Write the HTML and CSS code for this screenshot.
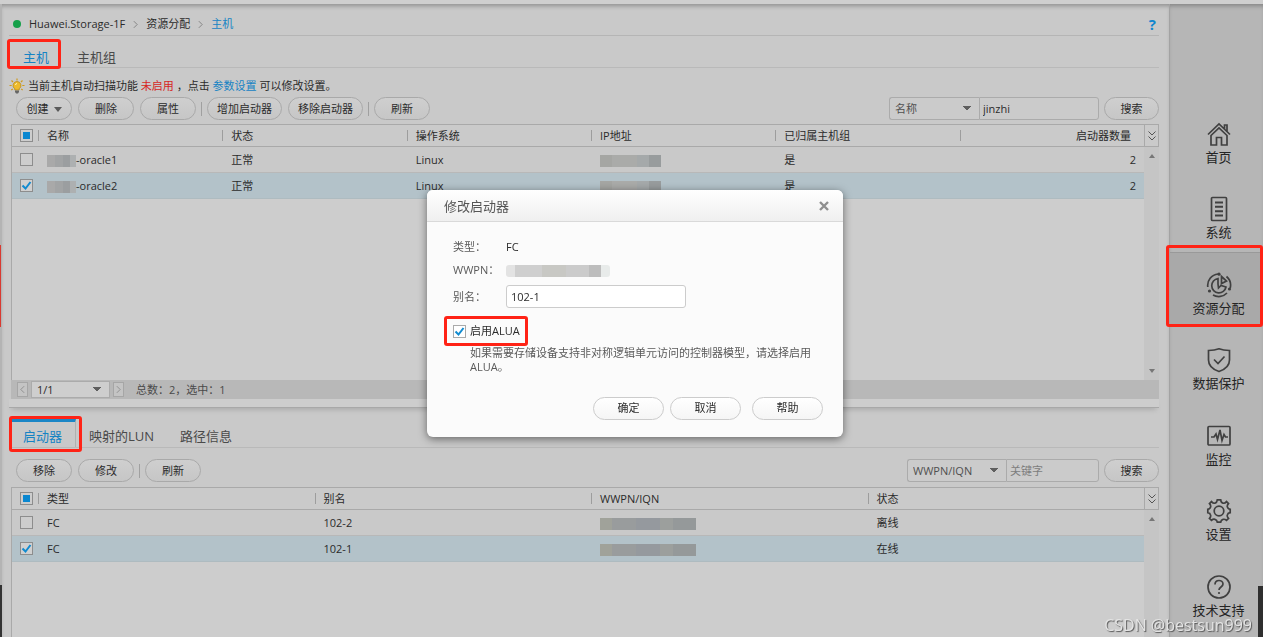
FILE: index.html
```html
<!DOCTYPE html>
<html lang="zh-CN">
<head>
<meta charset="utf-8">
<title>主机</title>
<link rel="stylesheet" href="styles.css">
</head>
<body>
<div class="app">
  <div class="topbar"></div>
  <div class="body">
    <div class="edge"><span class="edge-red"></span><span class="edge-dark"></span></div>
    <main class="main">
      <nav class="crumbs" aria-label="路径">
        <span class="dot"></span>
        <span>Huawei.Storage-1F</span>
        <svg class="crumb-arrow" viewBox="0 0 6 10"><path d="M1 1l4 4-4 4"/></svg>
        <span>资源分配</span>
        <svg class="crumb-arrow" viewBox="0 0 6 10"><path d="M1 1l4 4-4 4"/></svg>
        <a href="#" class="link">主机</a>
        <button class="help" type="button">?</button>
      </nav>

      <div class="tabs">
        <button type="button" class="tab tab-on mark">主机</button>
        <button type="button" class="tab">主机组</button>
      </div>

      <p class="notice">
        <svg class="bulb" viewBox="0 0 16 16">
          <path class="ray" d="M8 .5v2M2.500 2.500L4 4M13.500 2.500L12 4M.5 7.500h2.200M13.300 7.500h2.200M2.300 12l1.500-1M13.700 12l-1.500-1"/>
          <path class="glass" d="M8 3.500a4 4 0 0 0-2.200 7.300V12h4.400v-1.200A4 4 0 0 0 8 3.500z"/>
          <path class="shine" d="M6.500 7a1.500 1.500 0 0 1 1.500-1.500"/>
          <path class="cap" d="M6 12.500h4v1.500l-1 1.500H7L6 14z"/>
        </svg>
        <span>当前主机自动扫描功能 <em class="off">未启用</em> ，点击 <a href="#" class="link">参数设置</a> 可以修改设置。</span>
      </p>

      <div class="toolbar">
        <button type="button" class="btn">创建<span class="caret"></span></button>
        <button type="button" class="btn">删除</button>
        <button type="button" class="btn">属性</button>
        <span class="sep"></span>
        <button type="button" class="btn">增加启动器</button>
        <button type="button" class="btn">移除启动器</button>
        <span class="sep"></span>
        <button type="button" class="btn">刷新</button>
        <form class="search">
          <select class="field-pick pick-name" aria-label="搜索字段"><option>名称</option></select>
          <input class="field-key key-wide" type="text" value="jinzhi" aria-label="搜索内容">
          <button type="button" class="btn btn-search">搜索</button>
        </form>
      </div>

      <section class="grid grid-hosts">
        <div class="grid-area">
          <table class="table">
            <colgroup><col class="col-check"><col><col><col><col><col><col></colgroup>
            <thead><tr>
              <th><input type="checkbox" class="check check-some" aria-label="全选"></th>
              <th>名称</th><th>状态</th><th>操作系统</th><th>IP地址</th><th>已归属主机组</th><th class="num">启动器数量</th>
            </tr></thead>
            <tbody>
              <tr>
                <td><input type="checkbox" class="check" aria-label="oracle1"></td>
                <td><span class="mosaic mosaic-name"></span>-oracle1</td><td>正常</td><td>Linux</td>
                <td><span class="mosaic mosaic-ip"></span></td><td>是</td><td class="num">2</td>
              </tr>
              <tr class="picked">
                <td><input type="checkbox" class="check" checked aria-label="oracle2"></td>
                <td><span class="mosaic mosaic-name"></span>-oracle2</td><td>正常</td><td>Linux</td>
                <td><span class="mosaic mosaic-ip"></span></td><td>是</td><td class="num">2</td>
              </tr>
            </tbody>
          </table>
        </div>
        <div class="rail">
          <button type="button" class="rail-head" aria-label="选择列"><svg viewBox="0 0 10 12"><path d="M1.500 1.500L5 5l3.500-3.500M1.500 6.500L5 10l3.500-3.500"/></svg></button>
          <span class="rail-up"></span>
          <span class="rail-down"></span>
        </div>
      </section>

      <div class="pager">
        <button type="button" class="page-btn" aria-label="上一页"><svg viewBox="0 0 6 10"><path d="M5 1L1 5l4 4"/></svg></button>
        <select class="page-pick" aria-label="页码"><option>1/1</option></select>
        <button type="button" class="page-btn" aria-label="下一页"><svg viewBox="0 0 6 10"><path d="M1 1l4 4-4 4"/></svg></button>
        <span class="page-info">总数：2，选中：1</span>
      </div>
      <div class="splitter"></div>

      <div class="tabs tabs-lower">
        <button type="button" class="tab tab-on tab-card mark">启动器</button>
        <button type="button" class="tab">映射的LUN</button>
        <button type="button" class="tab">路径信息</button>
      </div>

      <div class="toolbar toolbar-lower">
        <button type="button" class="btn">移除</button>
        <button type="button" class="btn">修改</button>
        <span class="sep"></span>
        <button type="button" class="btn">刷新</button>
        <form class="search">
          <select class="field-pick pick-wwpn" aria-label="搜索字段"><option>WWPN/IQN</option></select>
          <input class="field-key" type="text" placeholder="关键字" aria-label="关键字">
          <button type="button" class="btn btn-search">搜索</button>
        </form>
      </div>

      <section class="grid grid-ports">
        <div class="grid-area">
          <table class="table">
            <colgroup><col class="col-check"><col><col><col><col></colgroup>
            <thead><tr>
              <th><input type="checkbox" class="check check-some" aria-label="全选"></th>
              <th>类型</th><th>别名</th><th>WWPN/IQN</th><th>状态</th>
            </tr></thead>
            <tbody>
              <tr>
                <td><input type="checkbox" class="check" aria-label="102-2"></td>
                <td>FC</td><td>102-2</td><td><span class="mosaic mosaic-wwpn"></span></td><td>离线</td>
              </tr>
              <tr class="picked">
                <td><input type="checkbox" class="check" checked aria-label="102-1"></td>
                <td>FC</td><td>102-1</td><td><span class="mosaic mosaic-wwpn"></span></td><td>在线</td>
              </tr>
            </tbody>
          </table>
        </div>
        <div class="rail">
          <button type="button" class="rail-head" aria-label="选择列"><svg viewBox="0 0 10 12"><path d="M1.500 1.500L5 5l3.500-3.500M1.500 6.500L5 10l3.500-3.500"/></svg></button>
          <span class="rail-up"></span>
        </div>
      </section>
    </main>

    <nav class="side" aria-label="主菜单">
      <a href="#" class="side-item">
        <svg viewBox="0 0 26 26"><path d="M2 13.500L13 3l11 10.500M18.500 8V4h2.500v6.300"/><path d="M5 14.500V24h5.500v-7.500h5V24H21v-9.500L13 7z"/></svg>
        <span>首页</span></a>
      <a href="#" class="side-item">
        <svg viewBox="0 0 26 26"><rect x="5.500" y="1.500" width="15" height="23" rx="1"/><path class="thick" d="M9 6.500h8M9 10.800h8M9 15.200h8M9 19.500h8"/></svg>
        <span>系统</span></a>
      <a href="#" class="side-item side-on mark">
        <svg viewBox="0 0 26 26"><path d="M12 6.500A7.200 7.200 0 1 0 20 15l-5-1.500-2.500 2.500-.5-4z"/><path d="M15.500 4.500l5 4.500-5 2.500z"/><path d="M1.800 15A11.500 11.500 0 0 1 12 2M7 23a11.500 11.500 0 0 0 14-2M24.200 16A11.500 11.500 0 0 0 20.500 4.500"/><circle class="fill" cx="13" cy="2.200" r="1.600"/><circle class="fill" cx="3.500" cy="19" r="1.600"/><circle class="fill" cx="23.500" cy="17" r="1.600"/></svg>
        <span>资源分配</span></a>
      <a href="#" class="side-item">
        <svg viewBox="0 0 26 26"><path d="M2.500 3.500C7 3.500 10 3 13 1.800c3 1.200 6 1.700 10.500 1.700V13c0 6-4.500 9.500-10.500 11.500C7 22.500 2.500 19 2.500 13z"/><path d="M8 12.500l4 4 6.500-7"/></svg>
        <span>数据保护</span></a>
      <a href="#" class="side-item">
        <svg viewBox="0 0 26 26"><rect x="2" y="3.500" width="22" height="18.500" rx="1"/><path d="M5 14h3l2-3 1.500 5.500L14 7l2 10.500 2-6 1.500 2.500H22"/></svg>
        <span>监控</span></a>
      <a href="#" class="side-item">
        <svg viewBox="0 0 26 26"><circle cx="13" cy="13" r="4.800"/><path d="M11.300 1.800h3.400q.3 2.800 2.300 3.300 1.700.6 3.500-1.500l2 2q-1.800 2-1 3.600.7 1.900 2.700 2.100v3.400q-2.300.3-2.800 2.100-.7 1.800 1.100 3.600l-2 2q-1.800-1.600-3.500-1-2 .6-2.300 2.800h-3.400q-.3-2.300-2.300-2.800-1.700-.7-3.500 1l-2-2q1.700-1.700 1-3.600-.6-1.800-2.700-2.100v-3.400q2-.2 2.700-2.100.7-1.700-1-3.600l2-2q1.800 2.100 3.500 1.500 2-.6 2.300-3.300z"/></svg>
        <span>设置</span></a>
      <a href="#" class="side-item">
        <svg viewBox="0 0 26 26"><circle cx="13" cy="13" r="11"/><path d="M9 10.500c0-5.500 8-5 8-.5 0 3-4 3-4 6"/><circle class="fill" cx="13" cy="19" r="1.100"/></svg>
        <span>技术支持</span></a>
      <span class="side-dark"></span>
    </nav>
  </div>
</div>

<div class="modal-wrap">
  <div class="modal" role="dialog" aria-labelledby="modal-title">
    <header class="modal-head">
      <h2 id="modal-title">修改启动器</h2>
      <button type="button" class="close" aria-label="关闭"><svg viewBox="0 0 10 10"><path d="M1 1l8 8M9 1L1 9"/></svg></button>
    </header>
    <form class="form">
      <span class="label">类型：</span><span class="value">FC</span>
      <span class="label">WWPN：</span><span class="value"><span class="mosaic mosaic-light"></span></span>
      <label class="label" for="alias">别名：</label><input id="alias" class="alias" type="text" value="102-1">
      <div class="alua">
        <label class="alua-label mark"><input type="checkbox" class="check" checked>启用ALUA</label>
        <p class="hint">如果需要存储设备支持非对称逻辑单元访问的控制器模型，请选择启用ALUA。</p>
      </div>
    </form>
    <footer class="actions">
      <button type="button" class="btn">确定</button>
      <button type="button" class="btn">取消</button>
      <button type="button" class="btn btn-help">帮助</button>
    </footer>
  </div>
</div>
<div class="watermark">CSDN @bestsun999</div>
</body>
</html>
```
FILE: styles.css
```css
* { box-sizing: border-box; }

body {
  margin: 0;
  background: #fff;
  color: #2b2b2b;
  font: 11px/16px "Open Sans", "Noto Sans CJK SC", sans-serif;
}

button, input, select { font: inherit; color: inherit; margin: 0; }
button { padding: 0; border: 0; background: none; white-space: nowrap; }
a { color: inherit; text-decoration: none; }
svg { fill: none; stroke: currentColor; }

.app {
  display: flex;
  flex-direction: column;
  height: calc(100vh - 4px);
  min-height: 600px;
  margin-right: 3px;
}
.topbar { height: 4px; background: #cfcfcf; }
.body { flex: 1; display: flex; min-height: 0; }

.edge { flex: 0 0 2px; display: flex; flex-direction: column; background: #b4b4b4; }
.edge-red { width: 1px; height: 82px; margin-top: 241px; background: #d93a31; }
.edge-dark { height: 52px; margin-top: auto; background: #333; }

.main {
  flex: 1;
  min-width: 0;
  display: flex;
  flex-direction: column;
  padding: 0 10px 0 7px;
  background: #c9c9c9;
  box-shadow: inset 0 4px 4px -2px #909090;
}

/* Breadcrumb */
.crumbs {
  display: flex;
  align-items: center;
  gap: 8px;
  padding: 12px 0 3px 4px;
  border-bottom: 1px solid #b5b5b5;
}
.dot { width: 8px; height: 8px; border-radius: 50%; background: #16a04a; }
.crumb-arrow { width: 5px; height: 9px; stroke: #777; }
.link { color: #1583c4; }
.help { margin-left: auto; padding-right: 3px; color: #0f86cf; font-size: 15px; font-weight: 700; }

/* Tabs */
.tabs { display: flex; border-bottom: 1px solid #b9b9b9; }
.tab { padding: 13px 14px 2px; color: #4a4a4a; font-size: 13px; line-height: 16px; }
.tab-on { position: relative; color: #1583c4; }
.mark::after {
  content: "";
  position: absolute;
  inset: 3px 2px -2px -2px;
  border: 3px solid #ff2316;
  border-radius: 3px;
  pointer-events: none;
}
.tabs-lower { margin-top: 11px; }
.tabs-lower .tab { padding: 9px 13px 3px; }
.tabs-lower .tab-card {
  margin-left: 3px;
  padding: 6px 13px 3px 11px;
  border-top: 3px solid #1b86c6;
  border-right: 1px solid #b0b0b0;
}
.tab-card.mark::after { inset: -6px -7px -5px -3px; }

/* Notice */
.notice { display: flex; align-items: center; gap: 3px; margin: 0; padding: 10px 0 3px; }
.bulb { width: 16px; height: 16px; }
.bulb .ray { stroke: #cf9a1d; stroke-width: 1.2; }
.bulb .glass { fill: #eebb2c; stroke: #b78a1c; stroke-width: .8; }
.bulb .shine { stroke: #fff3b0; }
.bulb .cap { fill: #666; stroke: none; }
.off { color: #d6281f; font-style: normal; }

/* Toolbar */
.toolbar { display: flex; align-items: center; gap: 6px; padding: 0 0 4px 7px; }
.toolbar-lower { padding-top: 11px; padding-bottom: 5px; }
.btn {
  min-width: 56px;
  height: 23px;
  padding: 0 9px;
  border: 1px solid #a9a9a9;
  border-radius: 12px;
  background: linear-gradient(#cfcfcf, #c6c6c6);
  line-height: 20px;
}
.caret {
  display: inline-block;
  margin-left: 5px;
  border: 4px solid transparent;
  border-top: 5px solid #5a5a5a;
  border-bottom: 0;
  vertical-align: middle;
}
.sep { width: 1px; height: 14px; margin: 0 -1px; background: #a0a0a0; }
.search { display: flex; margin-left: auto; }
.field-pick, .field-key, .page-pick {
  appearance: none;
  height: 23px;
  border: 1px solid #ababab;
  background: #cbcbcb;
  outline: 0;
}
.field-pick, .page-pick {
  background-image: linear-gradient(to bottom right, #5f5f5f 50%, transparent 51%), linear-gradient(to bottom left, #5f5f5f 50%, transparent 51%);
  background-repeat: no-repeat;
  background-size: 4px 5px;
  background-position: right 8px center, right 12px center;
}
.field-pick { padding: 0 20px 0 5px; border-right: 0; border-radius: 3px 0 0 3px; color: #505050; }
.pick-name { width: 90px; }
.pick-wwpn { width: 99px; }
.field-key { width: 93px; padding: 0 3px; border-radius: 0 3px 3px 0; }
.key-wide { width: 120px; }
.field-key::placeholder { color: #7d7d7d; opacity: 1; }
.btn-search { min-width: 55px; margin-left: 5px; }

/* Data grids */
.grid { display: flex; min-height: 0; margin-left: 2px; border-left: 1px solid #a9a9a9; background: #cdcdcd; }
.grid-hosts { flex: 256 1 0; }
.grid-ports { flex: 150 1 0; }
.grid-area { flex: 1; min-width: 0; }
.table { width: 100%; table-layout: fixed; border-collapse: separate; border-spacing: 0; }
.col-check { width: 26px; }
.table th {
  height: 23px;
  padding: 0 8px 0 9px;
  border: 1px solid #a9a9a9;
  border-width: 1px 0;
  background: linear-gradient(#9d9d9d, #9d9d9d) no-repeat left center / 1px 11px #cacaca;
  font-weight: 400;
  line-height: 16px;
  text-align: left;
}
.table td { height: 26px; padding: 0 8px 0 9px; border-bottom: 1px solid #b8b8b8; background: #c9c9c9; }
.table th:first-child, .table td:first-child { padding: 0 0 0 8px; background-image: none; }
.table .picked td { background: #b3c2c9; border-color: #aebbc0; }
.table .num { text-align: right; }
.table th.num { padding-right: 13px; }

.check {
  appearance: none;
  display: block;
  width: 13px;
  height: 13px;
  border: 1px solid #8d8d8d;
  background: #cdcdcd;
}
.check:checked {
  background: url("data:image/svg+xml,%3Csvg xmlns='http://www.w3.org/2000/svg' viewBox='0 0 11 11'%3E%3Cpath d='M1.500 5.500l3 3 5-6.500' fill='none' stroke='%23118bd0' stroke-width='2'/%3E%3C/svg%3E") center / 11px 11px no-repeat #d0d0d0;
}
.check-some { background: linear-gradient(#0a87d0, #0a87d0) center / 7px 7px no-repeat #cdcdcd; }

.rail { flex: 0 0 15px; display: flex; flex-direction: column; align-items: center; background: #c5c5c5; }
.rail-head { width: 15px; height: 23px; border: 1px solid #a9a9a9; background: #cacaca; }
.rail-head svg { display: block; width: 10px; height: 12px; margin: 0 auto; stroke: #555; }
.rail-up { margin-top: 7px; border: 3px solid transparent; border-top: 0; border-bottom: 4px solid #777; }
.rail-down { margin: auto 0 7px; border: 3px solid transparent; border-bottom: 0; border-top: 4px solid #777; }

/* Blurred-out values */
.mosaic { display: inline-block; height: 12px; vertical-align: middle; }
.mosaic-name { width: 29px; background: linear-gradient(90deg, #a9a9a9 0 28%, #a2a4a5 28% 56%, #9b9ea0 56% 80%, #adb0b1 80%); }
.mosaic-ip { width: 61px; background: linear-gradient(90deg, #a5a6a3 0 20%, #aaaba9 20% 60%, #a5a9aa 60% 80%, #989c9d 80%); }
.mosaic-wwpn { width: 96px; background: linear-gradient(90deg, #a0a29a 0 12%, #999c9d 12% 38%, #95999e 38% 62%, #9c9f9d 62% 76%, #95999a 76%); }
.mosaic-light { width: 104px; border-radius: 3px; background: linear-gradient(90deg, #e3e3e3 0 9%, #cfcfcf 9% 35%, #c8c8c4 35% 58%, #cbcbcb 58% 80%, #bdbdbd 80% 91%, #e8ebea 91%); }

/* Pager */
.pager { display: flex; align-items: center; gap: 3px; height: 19px; margin-left: 2px; padding-left: 6px; background: #b8b8b8; }
.page-btn { width: 11px; height: 15px; border: 1px solid #a6a6a6; background: #c4c4c4; }
.page-btn svg { display: block; width: 5px; height: 9px; margin: 0 auto; stroke: #888; }
.page-pick { width: 79px; height: 17px; padding: 0 5px; background-color: #cecece; line-height: 15px; }
.page-info { margin-left: 9px; color: #4a4a4a; }
.splitter { flex: 0 0 9px; border-bottom: 1px solid #a8a8a8; background: #cdcdcd; box-shadow: 0 4px 5px -3px #999; }

/* Side menu */
.side {
  position: relative;
  flex: 0 0 94px;
  display: flex;
  flex-direction: column;
  padding: 97px 0 8px;
  border-left: 1px solid #a3a3a3;
  background: #b6b6b6;
  box-shadow: inset 0 4px 4px -2px #858585;
}
.side-item { flex: 1; display: flex; flex-direction: column; align-items: center; padding: 20px 0 0 4px; color: #242424; font-size: 13px; }
.side-item svg { width: 26px; height: 26px; margin-bottom: 2px; stroke: #404040; stroke-width: 1.7; }
.side-item .thick { stroke-width: 2; }
.side-item .fill { fill: #404040; stroke: none; }
.side-on { position: relative; padding-top: 19px; border-top: 1px solid #999; background: #a9a9a9; }
.side-on.mark::after { inset: -8px 0 0 -4px; }
.side-dark { position: absolute; right: 0; bottom: 0; width: 5px; height: 51px; background: #2f2f2f; }

/* Dialog */
.modal-wrap {
  position: fixed;
  inset: 0 0 0 4px;
  display: flex;
  align-items: center;
  justify-content: center;
  padding-bottom: 14px;
}
.modal { width: 416px; border-radius: 6px; background: #fbfbfb; box-shadow: 0 2px 8px rgba(0, 0, 0, .5); }
.modal-head {
  display: flex;
  align-items: center;
  justify-content: space-between;
  height: 32px;
  padding: 0 14px 0 17px;
  border-bottom: 1px solid #d9d9d9;
  border-radius: 6px 6px 0 0;
  background: linear-gradient(#fff, #efefef);
}
.modal-head h2 { margin: 0; color: #555; font-size: 13px; font-weight: 400; }
.close svg { display: block; width: 10px; height: 10px; stroke: #8f8f8f; stroke-width: 2.4; }
.form {
  display: grid;
  grid-template-columns: 53px 1fr;
  align-items: center;
  row-gap: 7px;
  padding: 17px 28px 0 26px;
}
.label { color: #5a5a5a; white-space: nowrap; }
.alias { width: 180px; height: 23px; padding: 0 4px; border: 1px solid #ccc; border-radius: 3px; background: #fff; }
.alua { grid-column: 1 / 3; padding-top: 8px; }
.alua-label { position: relative; display: inline-flex; align-items: center; gap: 4px; }
.alua-label.mark::after { inset: -7px -8px -7px -9px; }
.modal .check { border-color: #aaa; background-color: #fff; }
.hint { margin: 4px 0 0 17px; color: #5a5a5a; line-height: 14px; }
.actions { display: flex; gap: 6px; justify-content: flex-end; padding: 23px 20px 17px; }
.actions .btn { min-width: 71px; border-color: #ccc; background: linear-gradient(#fff, #f5f5f5); }
.actions .btn-help { margin-left: 5px; }

.watermark {
  position: fixed;
  right: 14px;
  bottom: 6px;
  color: #e4e4e4;
  font-size: 16px;
  line-height: 20px;
  text-shadow: 1px 1px 1px #555;
}
```
